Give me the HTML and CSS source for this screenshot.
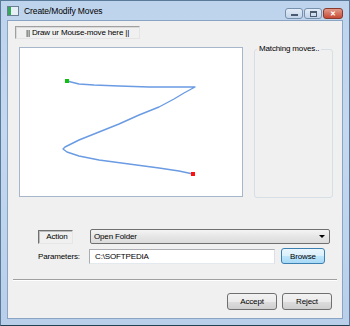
FILE: index.html
```html
<!DOCTYPE html>
<html lang="en">
<head>
    <meta charset="UTF-8">
    <title>Create/Modify Moves</title>
    <link rel="stylesheet" href="styles.css">
</head>
<body>
    <div class="window">
        <div class="titlebar">
            <span class="app-icon"></span>
            <span class="title">Create/Modify Moves</span>
            <div class="caption-btns">
                <span class="cap cap-min"><i></i></span>
                <span class="cap cap-max"><i></i></span>
                <span class="cap cap-close">&#x2715;</span>
            </div>
        </div>
        <div class="client">
            <div class="tab">|| Draw ur Mouse-move here ||</div>

            <div class="main-row">
                <div class="canvas">
                    <svg width="222" height="148" viewBox="0 0 222 148">
                        <polyline fill="none" stroke="#6a9be3" stroke-width="1.4" stroke-linejoin="round"
                            points="47,33 51,34 59,36 74,37 99,38 129,39 154,39 175,39 164,45 154,51 139,59 119,67 99,76 79,84 59,92 45,99 43,101 47,104 59,108 79,112 109,116 139,120 159,123 173,126"/>
                        <rect x="45" y="31" width="4" height="4" fill="#10c010"/>
                        <rect x="171" y="124" width="4" height="4" fill="#ff1010"/>
                    </svg>
                </div>
                <div class="matches">
                    <span class="legend">Matching moves..</span>
                </div>
            </div>

            <div class="form-row">
                <div class="label-box">Action</div>
                <div class="combo">
                    <span>Open Folder</span>
                    <span class="arrow"></span>
                </div>
            </div>
            <div class="form-row">
                <div class="label">Parameters:</div>
                <input class="textbox" type="text" value="C:\SOFTPEDIA">
                <button class="btn btn-default">Browse</button>
            </div>

            <div class="separator"></div>

            <div class="footer">
                <button class="btn btn-wide">Accept</button>
                <button class="btn btn-wide">Reject</button>
            </div>
        </div>
    </div>
</body>
</html>
```
FILE: styles.css
```css
body {
    margin: 0;
    padding: 0;
    font-family: "Liberation Sans", Arial, sans-serif;
    font-size: 8px;
    letter-spacing: -0.15px;
    color: #000;
    background: #fff;
}
.window {
    width: 350px;
    height: 326px;
    box-sizing: border-box;
    display: flex;
    flex-direction: column;
    padding: 0 6px 6px 6px;
    background: linear-gradient(#bed3ec, #c4d8f0 40%, #b9cfe9);
    border: 1px solid #5a7a99;
    border-bottom-color: #1f4150;
}
.titlebar {
    height: 19px;
    display: flex;
    align-items: center;
}
.app-icon {
    width: 10px;
    height: 8px;
    border: 1px solid #6a7f92;
    background: linear-gradient(90deg, #33a85a 35%, #e6eef6 35%);
    margin: 0 5px 0 0;
}
.title {
    font-size: 8.5px;
    letter-spacing: -0.1px;
    flex: 1;
}
.caption-btns {
    display: flex;
    align-self: flex-start;
    margin-top: 7px;
}
.cap {
    width: 16px;
    height: 9px;
    border: 1px solid #7790ae;
    border-radius: 3px;
    background: linear-gradient(#e3ecf7, #c2d3e8);
    display: flex;
    align-items: center;
    justify-content: center;
    margin-left: 1px;
}
.cap-min i {
    width: 7px;
    height: 2px;
    background: #4a5b70;
    margin-top: 3px;
}
.cap-max i {
    width: 5px;
    height: 3px;
    border: 1px solid #4a5b70;
    border-top-width: 2px;
}
.cap-close {
    width: 18px;
    background: linear-gradient(#e39a8a, #c64a34);
    border-color: #8a3a2c;
    color: #fff;
    font-size: 7px;
    font-weight: bold;
}
.client {
    flex: 1;
    background: #f0f0f0;
    border: 1px solid #8aa5c4;
}
.tab {
    margin: 5px 0 0 7px;
    width: 113px;
    height: 11px;
    line-height: 11px;
    border: 1px solid #a0a0a0;
    border-right-color: #e4e4e4;
    border-bottom-color: #e4e4e4;
    box-shadow: inset 1px 1px 0 #dadada;
    padding-left: 10px;
    white-space: nowrap;
}
.main-row {
    display: flex;
    align-items: flex-start;
    margin-top: 8px;
}
.canvas {
    margin-left: 11px;
    width: 222px;
    height: 148px;
    background: #fff;
    border: 1px solid #a7b7cb;
}
.canvas svg {
    display: block;
}
.matches {
    margin: 2px 0 0 11px;
    width: 77px;
    height: 147px;
    border: 1px solid #d5dfe5;
    border-radius: 3px;
    position: relative;
}
.legend {
    position: absolute;
    top: -6px;
    left: 2px;
    padding: 0 2px;
    background: #f0f0f0;
    line-height: 10px;
    white-space: nowrap;
}
.form-row {
    display: flex;
    align-items: center;
    margin-left: 30px;
}
.main-row + .form-row {
    margin-top: 31px;
}
.form-row + .form-row {
    margin-top: 4px;
}
.label-box {
    width: 30px;
    height: 12px;
    line-height: 12px;
    padding-left: 3px;
    text-align: center;
    border: 1px solid #707070;
    border-right-color: #e6e6e6;
    border-bottom-color: #e6e6e6;
    box-shadow: inset 1px 1px 0 #bcbcbc;
    margin-right: 17px;
}
.combo {
    width: 235px;
    height: 13px;
    border: 1px solid #707070;
    border-radius: 2px;
    background: linear-gradient(#f4f4f4, #e6e6e6 50%, #dcdcdc);
    display: flex;
    align-items: center;
    justify-content: space-between;
    padding-left: 3px;
}
.arrow {
    width: 0;
    height: 0;
    border-left: 3px solid transparent;
    border-right: 3px solid transparent;
    border-top: 3px solid #000;
    margin-right: 4px;
}
.label {
    width: 51px;
}
.textbox {
    width: 179px;
    height: 13px;
    padding: 0 0 0 5px;
    margin: 0;
    border: 1px solid #abadb3;
    border-bottom-color: #e3e9ef;
    border-right-color: #dbdfe6;
    font-family: "Liberation Sans", Arial, sans-serif;
    font-size: 8px;
    letter-spacing: -0.15px;
    outline: none;
}
.btn {
    font-family: "Liberation Sans", Arial, sans-serif;
    font-size: 8px;
    letter-spacing: -0.15px;
    height: 16px;
    padding: 0;
    border: 1px solid #707070;
    border-radius: 3px;
    background: linear-gradient(#f2f2f2, #ebebeb 50%, #dddddd 51%, #cfcfcf);
    color: #000;
}
.btn-default {
    margin-left: 6px;
    width: 44px;
    border-color: #3c7fb1;
    background: linear-gradient(#eaf6fd, #d9f0fc 50%, #bee6fd 51%, #a7d9f5);
}
.separator {
    margin: 15px 5px 0 5px;
    height: 1px;
    background: #a0a0a0;
    border-bottom: 1px solid #fff;
}
.footer {
    display: flex;
    justify-content: flex-end;
    gap: 5px;
    margin: 12px 10px 0 0;
}
.btn-wide {
    width: 50px;
    height: 17px;
}
```
